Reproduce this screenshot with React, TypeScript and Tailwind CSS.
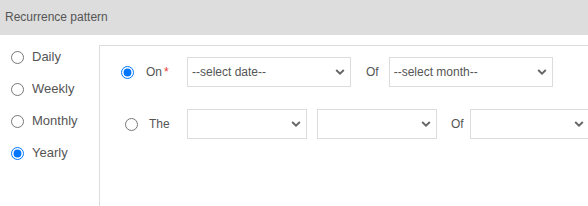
import React from "react";

function Chevron() {
  return (
    <svg
      className="pointer-events-none absolute right-[6px] top-1/2 -translate-y-1/2"
      width="10"
      height="7"
      viewBox="0 0 10 7"
      fill="none"
    >
      <path d="M1.2 1.5 L5 5.2 L8.8 1.5" stroke="#666" strokeWidth="1.9" />
    </svg>
  );
}

function Select({ w, text, className = "" }: { w: string; text?: string; className?: string }) {
  return (
    <div className={`relative h-[30px] shrink-0 ${w} ${className}`}>
      <select
        className="h-full w-full appearance-none rounded-none border border-[#dcdcdc] bg-white pl-[4px] pr-6 text-[12px] text-[#555] outline-none font-['Liberation_Sans',Arial,sans-serif]"
        defaultValue=""
      >
        <option value="">{text ?? ""}</option>
      </select>
      <Chevron />
    </div>
  );
}

export default function App() {
  const left = ["Daily", "Weekly", "Monthly", "Yearly"];
  return (
    <div className="w-[588px] h-[206px] overflow-hidden bg-white font-['Liberation_Sans',Arial,sans-serif] text-[#555]">
      <div className="flex h-[35px] items-center bg-[#dddddd] pl-[5px] pb-[1px] text-[12px] text-[#555]">
        Recurrence pattern
      </div>
      <div className="mt-[10px] flex h-[161px]">
        <div className="flex w-[99px] shrink-0 flex-col gap-[8px]">
          {left.map((l) => (
            <label key={l} className="flex h-[24px] items-center text-[13px]">
              <input
                type="radio"
                name="freq"
                defaultChecked={l === "Yearly"}
                className="m-0 ml-[11px] h-[13px] w-[13px]"
              />
              <span className="ml-[8px]">{l}</span>
            </label>
          ))}
        </div>
        <div className="flex-1 border-l border-t border-[#dddddd] pt-[11px] text-[12px]">
          <div className="flex h-[30px] items-center">
            <input type="radio" name="yr" defaultChecked className="m-0 ml-[21px] h-[13px] w-[13px]" />
            <span className="ml-[12px] w-[41px] shrink-0">
              On<span className="ml-[2px] text-[#e53935]">*</span>
            </span>
            <Select w="w-[164px]" text="--select date--" />
            <span className="ml-[15px] mr-[10px]">Of</span>
            <Select w="w-[164px]" text="--select month--" />
          </div>
          <div className="mt-[22px] flex h-[30px] items-center">
            <input type="radio" name="yr" className="m-0 ml-[25px] h-[13px] w-[13px]" />
            <span className="ml-[11px] w-[38px] shrink-0">The</span>
            <Select w="w-[120px]" />
            <Select w="w-[120px]" className="ml-[10px]" />
            <span className="ml-[14px] mr-[6px]">Of</span>
            <Select w="w-[120px]" />
          </div>
        </div>
      </div>
    </div>
  );
}
